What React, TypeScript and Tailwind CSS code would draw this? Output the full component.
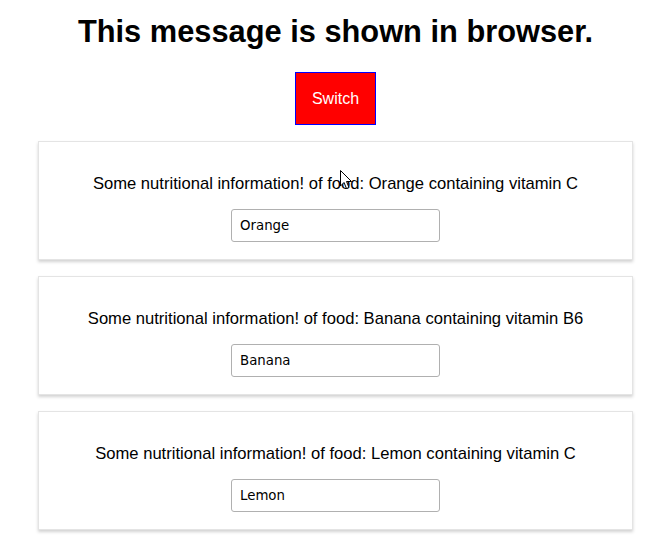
import React, { useState } from 'react';

type Food = { name: string; vitamin: string };

const foods: Food[] = [
  { name: 'Orange', vitamin: 'C' },
  { name: 'Banana', vitamin: 'B6' },
  { name: 'Lemon', vitamin: 'C' },
];

const FoodCard: React.FC<{ food: Food }> = ({ food }) => {
  const [value, setValue] = useState(food.name);
  return (
    <div className="w-[595px] mx-auto bg-white border border-[#e4e4e4] shadow-[0_2px_3px_rgba(0,0,0,0.18)] pt-[32px] pb-[17px] flex flex-col items-center">
      <p className="text-[16.6px] leading-[19px] text-black">
        Some nutritional information! of food: {food.name} containing vitamin {food.vitamin}
      </p>
      <input
        value={value}
        onChange={(e) => setValue(e.target.value)}
        className="mt-[16px] w-[209px] h-[33px] border border-[#b0b0b0] rounded-[3px] px-[8px] text-[13.33px] text-black outline-none"
        style={{ fontFamily: '"DejaVu Sans", sans-serif' }}
      />
    </div>
  );
};

export default function App() {
  const [flipped, setFlipped] = useState(false);
  return (
    <div className="relative min-h-[555px] bg-white font-['Liberation_Sans',Arial,sans-serif] pt-[16px] pr-[1px]">
      <h1 className="text-center text-[30.8px] leading-[32px] font-bold text-black">
        This message is shown in browser.
      </h1>
      <div className="flex justify-center mt-[24px]">
        <button
          onClick={() => setFlipped(!flipped)}
          className="w-[81px] h-[53px] bg-[#ff0000] border border-[#0000ff] text-white text-[16px]"
        >
          Switch
        </button>
      </div>
      <div className="mt-[16px] flex flex-col gap-[16px]">
        {(flipped ? [...foods].reverse() : foods).map((f) => (
          <FoodCard key={f.name} food={f} />
        ))}
      </div>

      {/* mouse pointer captured in the screenshot */}
      <svg
        className="absolute left-[340px] top-[170px] pointer-events-none"
        width="13"
        height="20"
        viewBox="0 0 13 20"
      >
        <path d="M0.5 0.5 L0.5 16 L4 12.5 L6.5 18.5 L9 17.5 L6.5 11.5 L11.5 11.5 Z" fill="white" stroke="black" strokeWidth="1" strokeLinejoin="round" />
      </svg>
    </div>
  );
}
